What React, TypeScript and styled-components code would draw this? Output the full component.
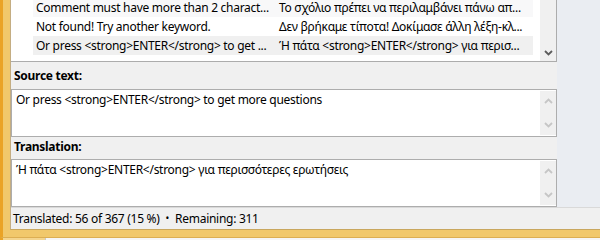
import React from "react";
import styled, { createGlobalStyle } from "styled-components";

const GlobalStyle = createGlobalStyle`
  html, body {
    margin: 0;
    padding: 0;
    background: #f4f4f4;
  }
  body {
    font-family: "Noto Sans", "Open Sans", sans-serif;
    font-size: 12px;
    letter-spacing: -0.28px;
    color: #000;
  }
`;

const Screen = styled.div`
  width: 600px;
  height: 240px;
  overflow: hidden;
  display: flex;
  flex-direction: column;
`;

const Window = styled.div`
  height: 238px;
  box-sizing: border-box;
  display: flex;
  flex-direction: column;
  border-left: 3px solid #eaa326;
  border-bottom: 1px solid #dcae52;
  background: #f1c86b;
  padding: 0 0 7px 7px;
`;

const BelowFrame = styled.div`
  flex: 1;
  display: flex;
  background: #f6f6f6;
`;

const FrameCorner = styled.div`
  width: 42px;
  border-left: 3px solid #eaa326;
  border-right: 1px solid #c8c8c8;
  background: #f4d58e;
`;

const Client = styled.div`
  flex: 1;
  display: flex;
  flex-direction: column;
  border-left: 1px solid #c4ad82;
  border-bottom: 1px solid #c9a75e;
  background: #f0f0f0;
  min-height: 0;
`;

const Body = styled.div`
  height: 207px;
  display: flex;
`;

const Main = styled.div`
  flex: 1;
  display: flex;
  flex-direction: column;
  min-width: 0;
`;

const Sidebar = styled.div`
  width: 43px;
  background: #eaedf2;
`;

const List = styled.div`
  height: 62px;
  box-sizing: border-box;
  display: flex;
  background: #fff;
  border-right: 1px solid #acacac;
  border-bottom: 1px solid #acacac;
  overflow: hidden;
`;

const Gutter = styled.div`
  width: 22px;
`;

const Rows = styled.div`
  width: 500px;
  display: flex;
  flex-direction: column;
  margin-top: -2px;
`;

const Row = styled.div<{ $shade: string }>`
  height: 19px;
  flex: none;
  display: grid;
  grid-template-columns: 243px 1fr;
  align-items: center;
  background: ${(p) => p.$shade};
  line-height: 15px;
`;

const Cell = styled.div`
  padding-left: 3px;
  white-space: nowrap;
  overflow: hidden;
`;

const ListGap = styled.div`
  width: 7px;
`;

const ScrollTrack = styled.div<{ $inset?: boolean }>`
  width: 16px;
  flex: none;
  background: #f0f0f0;
  display: flex;
  flex-direction: column;
  justify-content: space-between;
  align-items: center;
  margin: ${(p) => (p.$inset ? "1px 0" : "0")};
  padding: ${(p) => (p.$inset ? "7px 0" : "0 0 5px")};
`;

const Label = styled.div<{ $top: number }>`
  height: ${(p) => (p.$top === 6 ? 27 : 22)}px;
  box-sizing: border-box;
  padding: ${(p) => p.$top}px 0 0 3px;
  font-weight: bold;
  line-height: 15px;
`;

const Editor = styled.div`
  height: 48px;
  box-sizing: border-box;
  display: flex;
  background: #fff;
  border: 1px solid #adadad;
`;

const EditorText = styled.div`
  flex: 1;
  padding: 2px 4px;
  line-height: 15px;
  white-space: nowrap;
  overflow: hidden;
`;

const StatusBar = styled.div`
  flex: 1;
  display: flex;
  align-items: center;
  padding-left: 2px;
  border-top: 1px solid #d9d9d9;
  line-height: 15px;
  white-space: pre;
`;

const Bullet = styled.span`
  margin: 0 6px;
  font-size: 10px;
`;

const Chevron = ({ up, color }: { up?: boolean; color: string }) => (
  <svg width="9" height="6" viewBox="0 0 9 6">
    <path
      d={up ? "M1 5 L4.5 1.5 L8 5" : "M1 1 L4.5 4.5 L8 1"}
      fill="none"
      stroke={color}
      strokeWidth="1.8"
    />
  </svg>
);

const rows = [
  {
    src: "Comment must have more than 2 charact...",
    dst: "Το σχόλιο πρέπει να περιλαμβάνει πάνω απ...",
    shade: "#f8f8f9",
  },
  {
    src: "Not found! Try another keyword.",
    dst: "Δεν βρήκαμε τίποτα! Δοκίμασε άλλη λέξη-κλ...",
    shade: "#ffffff",
  },
  {
    src: "Or press <strong>ENTER</strong> to get ...",
    dst: "Ή πάτα <strong>ENTER</strong> για περισ...",
    shade: "#f0f0f0",
  },
];

const EditorBox = ({ text }: { text: string }) => (
  <Editor>
    <EditorText>{text}</EditorText>
    <ScrollTrack $inset>
      <Chevron up color="#c6c6c6" />
      <Chevron color="#c6c6c6" />
    </ScrollTrack>
  </Editor>
);

export default function App() {
  return (
    <>
      <GlobalStyle />
      <Screen>
        <Window>
          <Client>
            <Body>
              <Main>
                <List>
                  <Gutter />
                  <Rows>
                    {rows.map((r) => (
                      <Row key={r.src} $shade={r.shade}>
                        <Cell>{r.src}</Cell>
                        <Cell>{r.dst}</Cell>
                      </Row>
                    ))}
                  </Rows>
                  <ListGap />
                  <ScrollTrack>
                    <span />
                    <Chevron color="#5c5c5c" />
                  </ScrollTrack>
                </List>
                <Label $top={6}>Source text:</Label>
                <EditorBox text="Or press <strong>ENTER</strong> to get more questions" />
                <Label $top={2}>Translation:</Label>
                <EditorBox text="Ή πάτα <strong>ENTER</strong> για περισσότερες ερωτήσεις" />
              </Main>
              <Sidebar />
            </Body>
            <StatusBar>
              Translated: 56 of 367 (15 %)<Bullet>•</Bullet>Remaining: 311
            </StatusBar>
          </Client>
        </Window>
        <BelowFrame>
          <FrameCorner />
        </BelowFrame>
      </Screen>
    </>
  );
}
